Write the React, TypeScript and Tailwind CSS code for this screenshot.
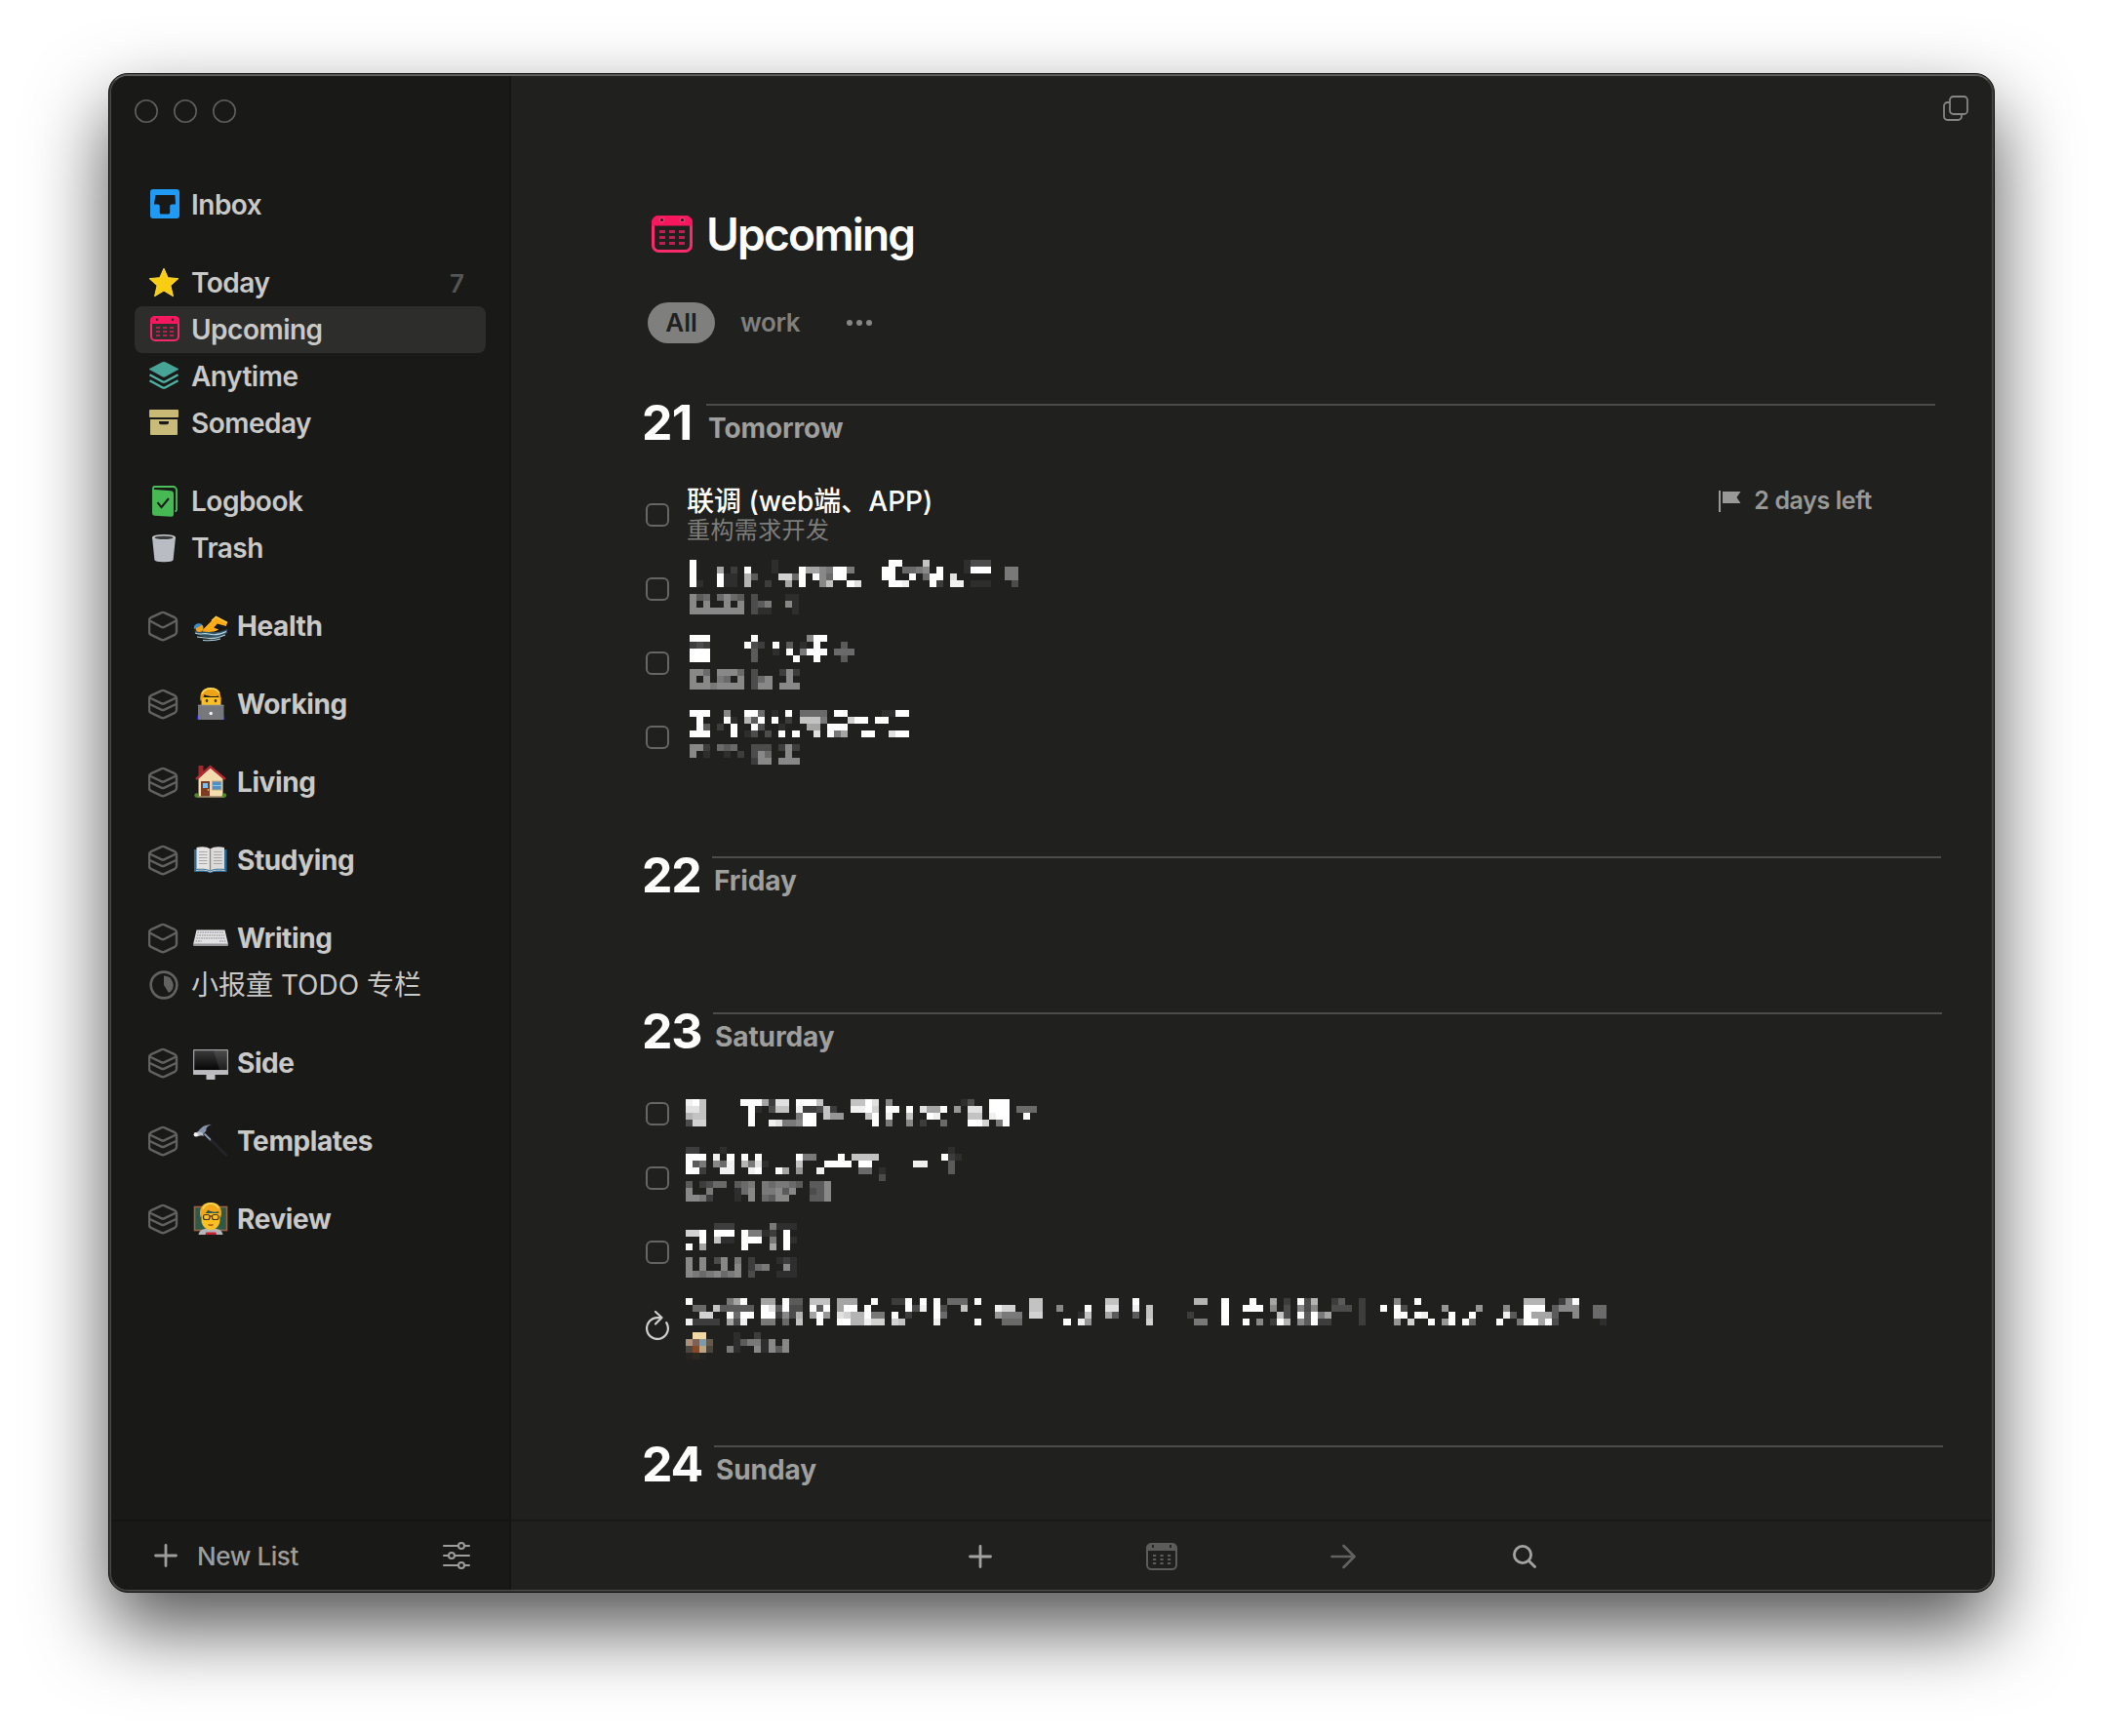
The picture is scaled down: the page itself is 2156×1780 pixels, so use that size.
import React from "react";

/* ---------- Sidebar icons (32 × 32) ---------- */

const box = { width: 32, height: 32, viewBox: "0 0 32 32", fill: "none", "aria-hidden": true } as const;

const InboxIcon = () => (
  <svg {...box}>
    <path
      fillRule="evenodd"
      fill="#219af3"
      d="M5 0h24a3 3 0 0 1 3 3v24a3 3 0 0 1-3 3H5a3 3 0 0 1-3-3V3a3 3 0 0 1 3-3Zm2.400 6L6 15.600h3.600c1.400 0 2.200.8 2.200 2V24a1.600 1.600 0 0 0 1.600 1.600h7.200a1.600 1.600 0 0 0 1.600-1.600v-6.400c0-1.200.8-2 2.200-2H28L27.400 6Z"
    />
  </svg>
);

const StarIcon = () => (
  <svg {...box}>
    <path
      fill="#fbcd12"
      stroke="#ffdb3a"
      strokeWidth="1"
      strokeLinejoin="round"
      d="M16 1.200l4.200 9.500 10.600 1-7.900 7.100 2.600 11L16 24.100l-9.500 5.700 2.600-11L1.200 11.700l10.600-1Z"
    />
  </svg>
);

const UpcomingIcon = () => (
  <svg {...box}>
    <rect x="3" y="3" width="28" height="24" rx="4" stroke="#f6286a" strokeWidth="2" />
    <path d="M2 10V6.500a4 4 0 0 1 4-4h22a4 4 0 0 1 4 4V10Z" fill="#f6175f" />
    <rect x="7.800" y="4.600" width="2.400" height="2.400" rx="1" fill="#2d2d2c" />
    <rect x="23.800" y="4.600" width="2.400" height="2.400" rx="1" fill="#2d2d2c" />
    {[13, 17, 21].map((y) =>
      [8, 15, 22].map((x) => <rect key={`${x}-${y}`} x={x} y={y} width="4.200" height="2" fill="#b3224f" />),
    )}
  </svg>
);

const AnytimeIcon = () => (
  <svg {...box}>
    <path d="M14.500 1.600a3.200 3.200 0 0 1 3 0L31 8.500 17.800 15.800a3.600 3.600 0 0 1-3.600 0L1 8.500Z" fill="#46a597" stroke="#4fb3a4" strokeWidth=".6" />
    <path d="M1.500 14.200l12.900 7a3.400 3.400 0 0 0 3.200 0l12.900-7M1.500 20.200l12.900 7a3.400 3.400 0 0 0 3.200 0l12.900-7" stroke="#4fb3a4" strokeWidth="2.400" />
  </svg>
);

const SomedayIcon = () => (
  <svg {...box}>
    <rect x="1" y="2" width="30" height="8" rx=".8" fill="#c8ba74" />
    <path fillRule="evenodd" fill="#c8bb79" d="M2 12h28v15.200a.8.8 0 0 1-.8.800H2.800a.8.8 0 0 1-.8-.800Zm9 2v1.200a2 2 0 0 0 2 2h6a2 2 0 0 0 2-2V14Z" />
  </svg>
);

const LogbookIcon = () => (
  <svg {...box}>
    <path d="M5 4V2.400A1.400 1.400 0 0 1 6.400 1H25.500A3.500 3.500 0 0 1 29 4.500V25l-1.400 1.800" stroke="#4bc05a" strokeWidth="1.800" />
    <path d="M4 3.800l19.500 1.500A2.700 2.700 0 0 1 26 8v21.500a2.300 2.300 0 0 1-2.500 2.300L6.200 30.700A2.400 2.400 0 0 1 4 28.300Z" fill="#46b954" />
    <path d="M9.500 17.200l4 5L21 13" stroke="#191918" strokeWidth="2" />
  </svg>
);

const TrashIcon = () => (
  <svg {...box}>
    <path d="M4 4.800h24L25.600 28c-.3 1.600-4.600 2.200-9.600 2.200S6.700 29.600 6.400 28Z" fill="#b9bdc3" />
    <ellipse cx="16" cy="4.900" rx="12" ry="3" fill="#c6cace" />
    <ellipse cx="16" cy="5.200" rx="9.600" ry="1.700" fill="#3a3b3c" />
  </svg>
);

const AreaIcon = ({ layers }: { layers: number }) => (
  <svg {...box} stroke="#626260" strokeWidth="2.400" strokeLinejoin="round">
    <path d="M13.300 2.300a3.600 3.600 0 0 1 3.400 0l10.500 4.900A3.300 3.300 0 0 1 29 10v12a3.300 3.300 0 0 1-1.800 2.900l-10.500 4.900a3.600 3.600 0 0 1-3.400 0L2.800 24.900A3.300 3.300 0 0 1 1 22V10a3.300 3.300 0 0 1 1.800-2.800Z" />
    {layers === 1 ? (
      <path d="M1.500 10.500l11.800 6.300a3.600 3.600 0 0 0 3.400 0l11.800-6.300" />
    ) : (
      <>
        <path d="M1.500 9.500l11.800 5.600a3.600 3.600 0 0 0 3.400 0l11.800-5.600" />
        <path d="M1.500 16l11.800 5.600a3.600 3.600 0 0 0 3.400 0L28.500 16" />
      </>
    )}
  </svg>
);

const ProgressIcon = () => (
  <svg {...box}>
    <circle cx="16" cy="16" r="13.400" stroke="#626260" strokeWidth="2.600" />
    <path d="M16 6.500a9.500 9.500 0 0 1 5 17.600L16 16Z" fill="#626260" />
  </svg>
);

/* ---------- Area emblems (36 × 36) ---------- */

const em = { width: 36, height: 36, viewBox: "0 0 36 36", fill: "none", role: "img" } as const;

const Swimmer = () => (
  <svg {...em} aria-label="🏊‍♂️">
    <path d="M1 22c5 3 10-1 15 1s10 2 19-2v4c-8 4-12 7-18 5S4 29 1 22Z" fill="#34525f" />
    <path d="M10 21.500L19 12.500 23.500 8.500 35 14.500l-1.200 3.500-9-2.600-3.600 4.200 5 1.900c-3 2.500-11 3-16 2Z" fill="#fdac18" />
    <path d="M19 12.500l4.500-4 11.500 6" stroke="#ffc93a" strokeWidth="1.600" />
    <circle cx="6.500" cy="20" r="4" fill="#f5a21b" />
    <path d="M.8 21c-.6-4.500 3.200-7 8.200-5.200L7.500 18Z" fill="#3a8fce" />
    <path d="M2 25c5 2.500 9-.5 14 1s11 1 18-2.500M4 29c5 .5 8 1 12 1.500s10-.5 17-3.500M10 32.500c6 .5 12 .8 18-1.500" stroke="#b8dcea" strokeWidth="1.100" />
  </svg>
);

const Technologist = () => (
  <svg {...em} aria-label="👨‍💻">
    <path d="M3.500 34c0-5 3-9 7-10h15c4 1 7 5 7 10Z" fill="#1b1bd0" />
    <path d="M8.500 11h20v7c0 4.500-4 8-10 8s-10-3.500-10-8Z" fill="#fcc021" />
    <path d="M7.500 15C6.500 6 10 1 18 1c6.500 0 11 4 10.500 13.500-1.500-.8-2-2.700-2.500-5-5 1-11 .6-14.500-1.500-.8 3-2 5.500-4 7Z" fill="#eda21a" />
    <path d="M9 7.500C11 3.500 14 2 18 2s7.500 1.500 9 5" stroke="#ffdc5c" strokeWidth="1.600" />
    <ellipse cx="14" cy="14.500" rx="1.300" ry="1.800" fill="#5c3310" />
    <ellipse cx="23" cy="14.500" rx="1.300" ry="1.800" fill="#5c3310" />
    <rect x="5" y="19" width="26.500" height="15" rx="1" fill="#77787c" />
    <path d="M5 20a1 1 0 0 1 1-1h24.500a1 1 0 0 1 1 1" stroke="#97989c" strokeWidth=".8" />
    <circle cx="18.200" cy="27.500" r="1.700" fill="#f4f4f6" />
  </svg>
);

const House = () => (
  <svg {...em} aria-label="🏠">
    <path d="M5.500 1h5v8l-5 4Z" fill="#a3262b" />
    <path d="M5.500 14L18 3l12.500 11v19h-25Z" fill="#f4dcae" />
    <path d="M3 15L17.500 2 33 15" stroke="#b32a34" strokeWidth="2.400" />
    <rect x="8" y="17" width="9" height="16" fill="#7a3c22" />
    <rect x="10" y="19" width="5" height="5" fill="#7ec0ea" />
    <circle cx="15.500" cy="26" r=".9" fill="#f0b347" />
    <rect x="19.500" y="17" width="9.500" height="9" fill="#4f8fc4" stroke="#c9ab7c" strokeWidth="1" />
    <path d="M19.500 21.500H29" stroke="#8ec6ea" strokeWidth="1" />
    <path d="M4 33h28" stroke="#a08a68" strokeWidth="1.600" />
    <circle cx="3.500" cy="31.500" r="2.200" fill="#4d8a2f" />
    <circle cx="32" cy="31.500" r="2.200" fill="#4d8a2f" />
  </svg>
);

const Book = () => (
  <svg {...em} aria-label="📖">
    <path d="M1 7h33.500v23H21l-3.500 1.200L14 30H1Z" fill="#2a6c96" />
    <path d="M3.500 5C9 3.800 14 4 17.500 6.500V28.500C14 26.500 9 26.300 3.500 27Z" fill="#e6e4e2" />
    <path d="M32 5C26.500 3.800 21 4 17.500 6.500V28.500C21 26.500 26.500 26.300 32 27Z" fill="#dddbd9" />
    <path d="M17.500 6.500V28" stroke="#8b8986" strokeWidth="1.400" />
    <path d="M6 9.500h8.500M6 12.500h8.500M6 15.500h8.500M6 18.500h8.500M6 21.500h8.500M21 9.500h8.500M21 12.500h8.500M21 15.500h8.500M21 18.500h8.500M21 21.500h8.500" stroke="#a9a6a4" strokeWidth="1" />
    <path d="M3 28.500c5-.8 11-.6 14.500 1.400C21 27.900 27 27.700 32.500 28.500" stroke="#d8d6d2" strokeWidth="1" />
  </svg>
);

const Keyboard = () => (
  <svg {...em} aria-label="⌨️">
    <path d="M3.500 9.500h29L36 24.500H0Z" fill="#e2e2e4" />
    <path d="M0 23.500h36l-.4 2.500H.4Z" fill="#98989c" />
    <path d="M4.500 12h27M3.800 15h28.400M3.200 18h29.600M2.600 21h6M27 21h6.400" stroke="#85858b" strokeWidth="1.200" strokeDasharray="1.600 .9" />
  </svg>
);

const Desktop = () => (
  <svg {...em} aria-label="🖥️">
    <defs>
      <linearGradient id="screen" x1="0" y1="0" x2="0" y2="1">
        <stop offset="0" stopColor="#3a3a3a" />
        <stop offset="1" stopColor="#060606" />
      </linearGradient>
    </defs>
    <rect x="0" y="4" width="36" height="26" rx="1" fill="#a4a4a8" />
    <rect x="1.200" y="5.200" width="33.600" height="19.800" fill="url(#screen)" />
    <path d="M21 5.200h13.800V25H27Z" fill="#fff" fillOpacity=".09" />
    <path d="M13.500 30h9v5h-9Z" fill="#c0c0c4" />
    <path d="M0 25.500h36V29a1 1 0 0 1-1 1H1a1 1 0 0 1-1-1Z" fill="#bcbcc0" />
  </svg>
);

const Hammer = () => (
  <svg {...em} aria-label="🔨">
    <path d="M11.500 10.500l8 8" stroke="#8296ae" strokeWidth="2" />
    <path d="M19 17.500L34 32.500" stroke="#242429" strokeWidth="3" strokeLinecap="round" />
    <path d="M5 8.500C8 3.500 12 1 19 1.200c-4.500 1.200-6 3.200-5.500 6l-3.500 4Z" fill="#8495aa" />
    <path d="M4.500 8l5 1.500 1.500 3.200-3-.4L3.500 13.500Z" fill="#b9bfc8" />
    <circle cx="2.800" cy="11.300" r="2.200" fill="#f2f3f5" />
  </svg>
);

const Teacher = () => (
  <svg {...em} aria-label="🧑‍🏫">
    <rect x="1.500" y="5.500" width="33" height="24" fill="#2c5949" stroke="#9a6540" strokeWidth="1.600" />
    <path d="M5.500 34c.5-4 4-6 8-6h9c4 0 7.500 2 8 6Z" fill="#b4b6bb" />
    <path d="M8.500 12h19v7c0 6-4.500 10-9.500 10s-9.500-4-9.500-10Z" fill="#fcc021" />
    <path d="M7.500 16C5.500 7 9.500 1 18 1s12.500 6 10.500 15c-1.500-1-2-3.500-2.500-6-4 1.500-8 .5-11-1.500-1 3.500-4.500 4.500-7.500 7.500Z" fill="#f2a71c" />
    <path d="M10 7.500C12 3.500 15 2 18 2s6.500 1.500 8 5" stroke="#ffdc5c" strokeWidth="1.600" />
    <rect x="10.500" y="13.500" width="6.500" height="5" rx="2" stroke="#4a2f14" strokeWidth="1.200" />
    <rect x="19.500" y="13.500" width="6.500" height="5" rx="2" stroke="#4a2f14" strokeWidth="1.200" />
    <path d="M17 15h2.500" stroke="#4a2f14" strokeWidth="1.200" />
    <path d="M15.500 23.500c1.500 1 3.500 1 5 0" stroke="#9c4a1c" strokeWidth="1.400" />
    <path d="M12.500 34l.8-2.500h10l.8 2.500Z" fill="#c8202c" />
  </svg>
);

/* ---------- Sidebar ---------- */

type Item = { icon: React.ReactNode; label: string; count?: number; active?: boolean };

const groups: Item[][] = [
  [{ icon: <InboxIcon />, label: "Inbox" }],
  [
    { icon: <StarIcon />, label: "Today", count: 7 },
    { icon: <UpcomingIcon />, label: "Upcoming", active: true },
    { icon: <AnytimeIcon />, label: "Anytime" },
    { icon: <SomedayIcon />, label: "Someday" },
  ],
  [
    { icon: <LogbookIcon />, label: "Logbook" },
    { icon: <TrashIcon />, label: "Trash" },
  ],
];

type Area = { layers: number; emblem: React.ReactNode; label: string; project?: string };

const areas: Area[] = [
  { layers: 1, emblem: <Swimmer />, label: "Health" },
  { layers: 2, emblem: <Technologist />, label: "Working" },
  { layers: 2, emblem: <House />, label: "Living" },
  { layers: 2, emblem: <Book />, label: "Studying" },
  { layers: 1, emblem: <Keyboard />, label: "Writing", project: "小报童 TODO 专栏" },
  { layers: 2, emblem: <Desktop />, label: "Side" },
  { layers: 2, emblem: <Hammer />, label: "Templates" },
  { layers: 2, emblem: <Teacher />, label: "Review" },
];

const row = "flex h-12 items-center rounded-lg pl-[14px] pr-[22px]";

function Sidebar() {
  return (
    <aside className="flex w-[410px] shrink-0 flex-col border-r-2 border-[#141413] bg-[#191917] text-[28px] text-[#c9c9c8]">
      <div className="flex gap-4 pt-6 pl-6">
        {[0, 1, 2].map((i) => (
          <svg key={i} width="24" height="24" viewBox="0 0 24 24" fill="none" aria-hidden>
            <circle cx="12" cy="12" r="11.200" stroke="#5f5f5e" strokeWidth="1.600" />
          </svg>
        ))}
      </div>
      <nav className="mt-[60px] flex flex-1 flex-col gap-8 pr-6 pl-6">
        {groups.map((items, g) => (
          <div key={g}>
            {items.map((it) => (
              <div key={it.label} className={it.active ? `${row} bg-[#2d2d2c]` : row}>
                {it.icon}
                <span className="ml-[12px] flex-1 font-semibold tracking-[-0.5px]">{it.label}</span>
                {it.count && <span className="text-[26px] font-semibold text-[#555554]">{it.count}</span>}
              </div>
            ))}
          </div>
        ))}
        {areas.map((a) => (
          <div key={a.label}>
            <div className={row}>
              <AreaIcon layers={a.layers} />
              <span className="ml-[14px] flex size-9 items-center">{a.emblem}</span>
              <span className="ml-[9px] font-bold tracking-[-0.4px]">{a.label}</span>
            </div>
            {a.project && (
              <div className={row}>
                <ProgressIcon />
                <span className="ml-[12px] leading-10">{a.project}</span>
              </div>
            )}
          </div>
        ))}
      </nav>
      <footer className="flex h-[72px] items-center border-t-2 border-[#141413] pr-10 pl-11 text-[#9d9d9c]">
        <svg width="24" height="24" viewBox="0 0 24 24" fill="none" stroke="currentColor" strokeWidth="2.800" strokeLinecap="round" aria-hidden>
          <path d="M1.500 12h21M12 1.500v21" />
        </svg>
        <span className="ml-5 flex-1 text-[26px] font-medium tracking-[-0.4px]">New List</span>
        <svg width="28" height="28" viewBox="0 0 28 28" fill="none" stroke="currentColor" strokeWidth="2" strokeLinecap="round" aria-hidden>
          <path d="M1 4h14.500M22.500 4H27M1 14h4.500M12.500 14H27M1 24h14.500M22.500 24H27" />
          <circle cx="19" cy="4" r="3" />
          <circle cx="9" cy="14" r="3" />
          <circle cx="19" cy="24" r="3" />
        </svg>
      </footer>
    </aside>
  );
}

/* ---------- Pixelated (redacted) task text ----------
   Each row lists runs as "column:levels"; a level is a hex digit from
   1 (nearly background) to f (white). */

type Mosaic = { cols: number; width: number; rows: string[]; tint?: [number, number, string][] };

function Redacted({ mosaic, className }: { mosaic: Mosaic; className: string }) {
  const { cols, width, rows, tint = [] } = mosaic;
  const cells: React.ReactNode[] = [];
  rows.forEach((line, y) => {
    line.split(" ").forEach((run) => {
      if (!run) return;
      const [start, levels] = run.split(":");
      [...levels].forEach((l, i) => {
        const v = Math.round(31 + (parseInt(l, 16) / 15) * 224);
        cells.push(<rect key={`${y}-${start}-${i}`} x={Number(start) + i} y={y} width="1" height="1" fill={`rgb(${v},${v},${v})`} />);
      });
    });
  });
  return (
    <svg
      className={className}
      width={width}
      height={rows.length * 7}
      viewBox={`0 0 ${cols} ${rows.length}`}
      preserveAspectRatio="none"
      shapeRendering="crispEdges"
      aria-hidden
    >
      {cells}
      {tint.map(([x, y, c]) => (
        <rect key={`t${x}-${y}`} x={x} y={y} width="1" height="1" fill={c} />
      ))}
    </svg>
  );
}

const tomorrow: Mosaic[] = [
  {
    cols: 48,
    width: 337,
    rows: [
      "0:f 12:1 29:ff 34:b 40:1 41:333",
      "0:f 4:9 6:2 8:f 12:1 16:f 17:99 19:76 21:ff 23:6 28:ff 31:556 34:7 36:f 40:1 41:fff 46:66",
      "0:f 4:f 5:11 8:a 9:4 13:cc 15:5 16:f 18:f 19:7 20:5 21:ff 28:ff 32:f 34:5 35:ff 38:d 46:66",
      "0:f 1:1 4:f 5:11 8:a 11:2 14:9 16:f 19:7 20:b 23:f 24:d 29:ff 31:e 35:ff 36:2 38:ee 41:111 47:3",
      "",
      "0:7 1:4 2:5 4:5 5:7 6:5 7:4 9:3 14:1 15:1",
      "0:7 2:7 5:7 7:7 9:3 10:4 11:6 14:7 15:1",
      "0:77777777 9:3 10:11 15:1",
    ],
  },
  {
    cols: 24,
    width: 169,
    rows: [
      "0:fff 9:f 17:7 18:ff",
      "0:2 1:3 2:2 8:f 9:3 10:2 12:f 14:4 16:1 18:f 22:4",
      "0:fff 9:4 12:1 14:f 16:6 17:f 18:ff 21:555",
      "0:fff 9:4 15:f 18:f 22:4",
      "",
      "0:775 4:7775 9:3 13:2 14:7 15:2",
      "0:7 2:7 4:65 7:7 9:3 10:57 14:7",
      "0:7776 4:7777 9:3 10:77 13:777",
    ],
  },
  {
    cols: 32,
    width: 225,
    rows: [
      "0:fff 5:7 8:ff 10:5 12:1 14:f 16:5555 21:ff 28:1 29:1 30:ff",
      "1:f 5:f 6:1 8:a 9:4 10:f 12:f 14:2 16:bbb 19:6 23:c 24:ff 27:ff",
      "1:f 2:4 4:2 6:f 9:f 10:3 13:1 17:99 20:fff",
      "0:fff 6:f 8:1 9:3 11:3 13:f 15:f 18:d 20:f 21:6 22:9 25:ff 29:d 30:ff",
      "",
      "0:77 2:2 4:545 9:333 13:2 14:7 15:2",
      "0:7 2:1 5:1 7:2 9:3 10:75 14:7",
      "9:2 10:77 13:777",
    ],
  },
];

const saturday: Mosaic[] = [
  {
    cols: 51,
    width: 360,
    rows: [
      "0:efb 8:fff 11:9 12:2 13:dd 16:fff 19:b 24:bbfd 29:7 40:1 41:3 44:fff",
      "0:ddb 9:f 10:1 12:3 13:bb 16:e 17:223 20:b 21:2 24:ee 26:f 27:c 29:ff 32:f 34:d 35:99 37:f 39:8 41:dd 44:fff 48:555",
      "0:abb 9:f 16:6 17:ff 20:b 21:88 26:b 27:f 29:e 32:b 35:fe 41:bb 44:eff 49:f",
      "0:3 1:cc 9:f 12:ed 14:66 16:7 17:ff 27:f 29:6 32:7 34:2 37:5 41:ff 43:c 45:6 46:f",
    ],
  },
  {
    cols: 40,
    width: 283,
    rows: [
      "0:22 5:1 38:1",
      "0:fff 4:e 6:f 8:f 10:f 16:f 17:66 22:f 24:bbbb 37:f 38:2 39:1",
      "0:f 1:4 2:6 4:7 5:5 6:e 8:a 9:6 10:d 11:1 16:b 20:ffff 25:ff 33:ee 38:4",
      "0:ff 2:2 5:ee 9:e 10:f 13:f 14:9 16:8 19:e 25:55 28:1 38:4",
      "28:3",
      "0:4 2:2355 7:456 11:65665 16:4 18:444 20:7",
      "0:7 3:6 7:157 11:66747 18:344 20:7",
      "0:77 2:62 7:1 9:7 11:547 14:7 18:44 20:7",
    ],
  },
  {
    cols: 16,
    width: 114,
    rows: [
      "4:222 12:6 13:111",
      "0:cc 2:f 4:fff 8:f 9:66 11:1 12:2 14:f",
      "2:f 4:b 5:11 8:fff 12:6 14:f 15:1",
      "0:f 2:9 8:f 12:9 14:f",
      "",
      "0:7 2:7 4:3 5:7 7:6 9:2 13:121",
      "0:7 2:7 5:7 7:7 9:2 10:56 14:7 15:1",
      "0:76567567 9:3 13:111",
    ],
  },
  {
    cols: 134,
    width: 944,
    rows: [
      "0:f 6:69f 11:99 14:f 15:44 18:bbb 22:999 27:f 30:22 32:f 34:f 36:f 38:555 42:f 50:bb 61:bb 65:f 74:aa 78:f 82:f 85:9 87:2 89:f 90:3 91:a 94:24 98:2 103:7 106:f 122:aaa 127:2 128:7 129:f",
      "1:55 4:b 5:4 6:4444 11:fd 13:4 14:f 15:33 18:f 19:4 20:f 22:9 23:f 24:f 26:f 32:f 33:3 34:e 36:f 37:3 40:b 45:ecc 50:bb 54:7 58:f 61:dd 65:e 67:b 81:fff 78:f 85:7 87:3 89:7 90:3 91:7 94:333 98:2 101:f 103:f 104:3 110:8 115:8 119:7 122:fff 126:4 127:77 129:7 132:55",
      "2:cc 6:f 7:5 8:ff 11:ff 13:2 14:7 15:3 16:a 18:9 19:f 20:8 22:dcaa 26:f 27:66 30:f 32:2 36:f 37:5 45:8666 50:cc 57:1 58:b 61:94 65:4 67:b 73:2 78:f 86:b 87:3 89:f 90:4 91:f 92:6 93:9 98:2 103:ff 106:fe 111:f 114:f 119:e 120:4 122:f 123:999 126:4 129:7 132:55",
      "0:e 1:2222 6:9 7:3 8:e 11:66 14:5 16:b 19:f 22:ffaa 26:ecc 30:cb 36:e 42:f 46:555 55:f 57:e 58:8 67:c 74:66 78:f 81:f 83:7 85:2 86:f 87:a 89:7 90:4 91:f 92:22 98:2 103:8 105:c 108:f 110:8 111:f 113:f 114:5 118:f 121:6 122:ff 124:9 125:f 126:3 133:1",
      "",
      "7:1 10:2",
      "7:1 8:4 9:66 11:1 12:7 14:7",
      "6:6 7:1 10:7 11:17 13:47",
      "",
    ],
    tint: [
      [1, 5, "#f2d8a3"], [2, 5, "#f0d6a0"],
      [0, 6, "#a9917a"], [1, 6, "#7d6058"], [2, 6, "#7b9baa"], [3, 6, "#655a4a"],
      [0, 7, "#4c4841"], [1, 7, "#854b27"], [2, 7, "#baa584"], [3, 7, "#4b463c"],
      [0, 8, "#25241f"], [1, 8, "#2c2925"], [2, 8, "#242320"],
    ],
  },
];

/* ---------- Main list ---------- */

const Checkbox = () => <span className="size-6 shrink-0 rounded-[6px] border-2 border-[#666665]" />;

const RepeatIcon = () => (
  <svg className="-mt-[4px] shrink-0" width="24" height="32" viewBox="0 0 24 32" fill="none" stroke="#d0d0cf" strokeWidth="2.200" strokeLinecap="round" aria-hidden>
    <path d="M21.200 14.200A10.900 10.900 0 1 1 12 9.100h3.500" />
    <path d="M10 3l6.500 6-6.500 6.500" strokeLinejoin="round" />
  </svg>
);

function Day({ number, name, numberClass, children }: { number: string; name: string; numberClass: string; children?: React.ReactNode }) {
  return (
    <section className="pb-[84px]">
      <header className="flex h-[76px] items-start">
        <span className={`-mt-[6px] shrink-0 text-[50px] leading-[50px] font-bold text-white ${numberClass}`}>{number}</span>
        <h2 className="w-[1260px] border-t-2 border-[#4c4c4b] pl-[2px] text-[28px] leading-[46px] font-bold tracking-[-0.1px] text-[#9f9f9e]">{name}</h2>
      </header>
      {children}
    </section>
  );
}

function TaskRow({ short, icon, children }: { short?: boolean; icon?: React.ReactNode; children: React.ReactNode }) {
  return (
    <div className={short ? "flex h-14 items-start pl-1" : "flex h-[76px] items-start pl-1"}>
      <span className="flex h-full items-center">{icon ?? <Checkbox />}</span>
      {children}
    </div>
  );
}

function Main() {
  return (
    <main className="flex min-w-0 flex-1 flex-col bg-[#20201e]">
      <div className="flex h-[46px] shrink-0 items-end justify-end pr-6">
        <svg width="26" height="26" viewBox="0 0 26 26" fill="none" stroke="#868685" strokeWidth="1.800" aria-hidden>
          <rect x="7" y="1" width="18" height="18" rx="3.500" />
          <path d="M7 7H4.500A3.500 3.500 0 0 0 1 10.500v11A3.500 3.500 0 0 0 4.500 25h11a3.500 3.500 0 0 0 3.500-3.500V19" />
        </svg>
      </div>
      <div className="min-h-0 flex-1 overflow-hidden pl-[134px]">
        <div className="mt-[86px] flex h-[60px] items-center pl-[10px]">
          <svg width="42" height="38" viewBox="0 0 42 38" fill="none" aria-hidden>
            <rect x="1.500" y="1.500" width="39" height="35" rx="6" stroke="#fa2a6d" strokeWidth="3" />
            <path d="M0 10.500V7a7 7 0 0 1 7-7h28a7 7 0 0 1 7 7v3.500Z" fill="#f6175f" />
            <circle cx="10.500" cy="4.500" r="2.800" fill="#fa3b78" />
            <circle cx="31.500" cy="4.500" r="2.800" fill="#fa3b78" />
            <circle cx="10.500" cy="4.500" r="1.600" fill="#20201e" />
            <circle cx="31.500" cy="4.500" r="1.600" fill="#20201e" />
            {[15, 21, 27].map((y) =>
              [8, 18, 28].map((x) => <rect key={`${x}-${y}`} x={x} y={y} width="6" height="3" fill="#be1f50" />),
            )}
          </svg>
          <h1 className="ml-[14px] text-[46px] leading-[60px] font-semibold tracking-[-1.8px] text-white">Upcoming</h1>
        </div>
        <div className="mt-[40px] flex h-[42px] items-center pl-[6px] text-[26px] leading-10 font-semibold text-[#80807e]">
          <span className="flex h-full w-[69px] items-center justify-center rounded-full bg-[#7f7f7d] pb-[1px] text-[#20201f]">All</span>
          <span className="ml-[26px] pb-[1px] tracking-[-0.4px]">work</span>
          <span className="ml-[48px] flex gap-1">
            <i className="size-[6px] rounded-full bg-[#868685]" />
            <i className="size-[6px] rounded-full bg-[#868685]" />
            <i className="size-[6px] rounded-full bg-[#868685]" />
          </span>
        </div>
        <div className="mt-[62px]">
          <Day number="21" name="Tomorrow" numberClass="w-[66px] tracking-[-0.8px]">
            <TaskRow>
              <div className="ml-[18px] pt-2">
                <p className="text-[28px] leading-8 font-medium text-white">联调 (web端、APP)</p>
                <p className="text-[24px] leading-7 tracking-[0.4px] text-[#7d7d7c]">重构需求开发</p>
              </div>
              <div className="mt-2 mr-[123px] ml-auto flex h-8 items-center text-[#999998]">
                <svg width="23" height="22" viewBox="0 0 23 22" fill="currentColor" aria-hidden>
                  <path d="M0 0h2v22H0ZM4 1h18.500l-4 6 4 6H4Z" />
                </svg>
                <span className="ml-[13px] text-[25px] font-semibold tracking-[-0.4px] whitespace-nowrap">2 days left</span>
              </div>
            </TaskRow>
            <TaskRow><Redacted mosaic={tomorrow[0]} className="mt-2 ml-[21px]" /></TaskRow>
            <TaskRow><Redacted mosaic={tomorrow[1]} className="mt-[9px] ml-[21px]" /></TaskRow>
            <TaskRow><Redacted mosaic={tomorrow[2]} className="mt-[10px] ml-[21px]" /></TaskRow>
          </Day>
          <Day number="22" name="Friday" numberClass="w-[72px] tracking-[-1.2px]" />
          <Day number="23" name="Saturday" numberClass="w-[73px] tracking-[-1.2px]">
            <TaskRow short><Redacted mosaic={saturday[0]} className="mt-[13px] ml-[17px]" /></TaskRow>
            <TaskRow><Redacted mosaic={saturday[1]} className="mt-[6px] ml-[17px]" /></TaskRow>
            <TaskRow><Redacted mosaic={saturday[2]} className="mt-[8px] ml-[17px]" /></TaskRow>
            <TaskRow icon={<RepeatIcon />}><Redacted mosaic={saturday[3]} className="mt-[9px] ml-[17px]" /></TaskRow>
          </Day>
          <Day number="24" name="Sunday" numberClass="w-[74px] tracking-[-1.2px]" />
        </div>
      </div>
      <footer className="flex h-[72px] shrink-0 justify-center border-t-2 border-[#191918] pt-[2px] pl-[2px] text-[#a3a3a2]">
        <span className="flex w-[186px] items-center justify-center">
          <svg width="24" height="24" viewBox="0 0 24 24" fill="none" stroke="currentColor" strokeWidth="2.800" strokeLinecap="round" aria-hidden>
            <path d="M1.500 12h21M12 1.500v21" />
          </svg>
        </span>
        <span className="flex w-[186px] items-center justify-center text-[#5c5c5b]">
          <svg width="32" height="28" viewBox="0 0 32 28" fill="none" aria-hidden>
            <rect x="1" y="1" width="30" height="26" rx="4.500" stroke="currentColor" strokeWidth="2" />
            <path d="M0 8V6a6 6 0 0 1 6-6h20a6 6 0 0 1 6 6v2Z" fill="currentColor" />
            <path d="M7 2v3M25 2v3" stroke="#20201e" strokeWidth="1.800" />
            {[12, 16, 20].map((y) =>
              [7, 14.5, 22].map((x) => <rect key={`${x}-${y}`} x={x} y={y} width="3.200" height="2" fill="currentColor" />),
            )}
          </svg>
        </span>
        <span className="flex w-[186px] items-center justify-center text-[#626261]">
          <svg width="26" height="26" viewBox="0 0 26 26" fill="none" stroke="currentColor" strokeWidth="2.600" strokeLinecap="round" strokeLinejoin="round" aria-hidden>
            <path d="M1.500 13h23M13.500 2l11 11-11 11" />
          </svg>
        </span>
        <span className="flex w-[186px] items-center justify-center">
          <svg width="24" height="24" viewBox="0 0 24 24" fill="none" stroke="currentColor" strokeWidth="2.800" strokeLinecap="round" aria-hidden>
            <circle cx="10" cy="10" r="8.600" />
            <path d="M16.500 16.500l6 6" />
          </svg>
        </span>
      </footer>
    </main>
  );
}

export default function App() {
  return (
    <div className="h-[1780px] w-[2156px] overflow-hidden bg-white pt-[75px] pl-[111px] font-['Inter','Noto_Sans_CJK_SC',sans-serif]">
      <div className="h-[1558px] w-[1934px] rounded-[20px] border border-black bg-black shadow-[0_36px_80px_rgba(0,0,0,0.68)]">
        <div className="flex h-full w-full overflow-hidden rounded-[19px] border-2 border-[#444443] border-t-[#60605f] bg-[#20201e]">
          <Sidebar />
          <Main />
        </div>
      </div>
    </div>
  );
}
